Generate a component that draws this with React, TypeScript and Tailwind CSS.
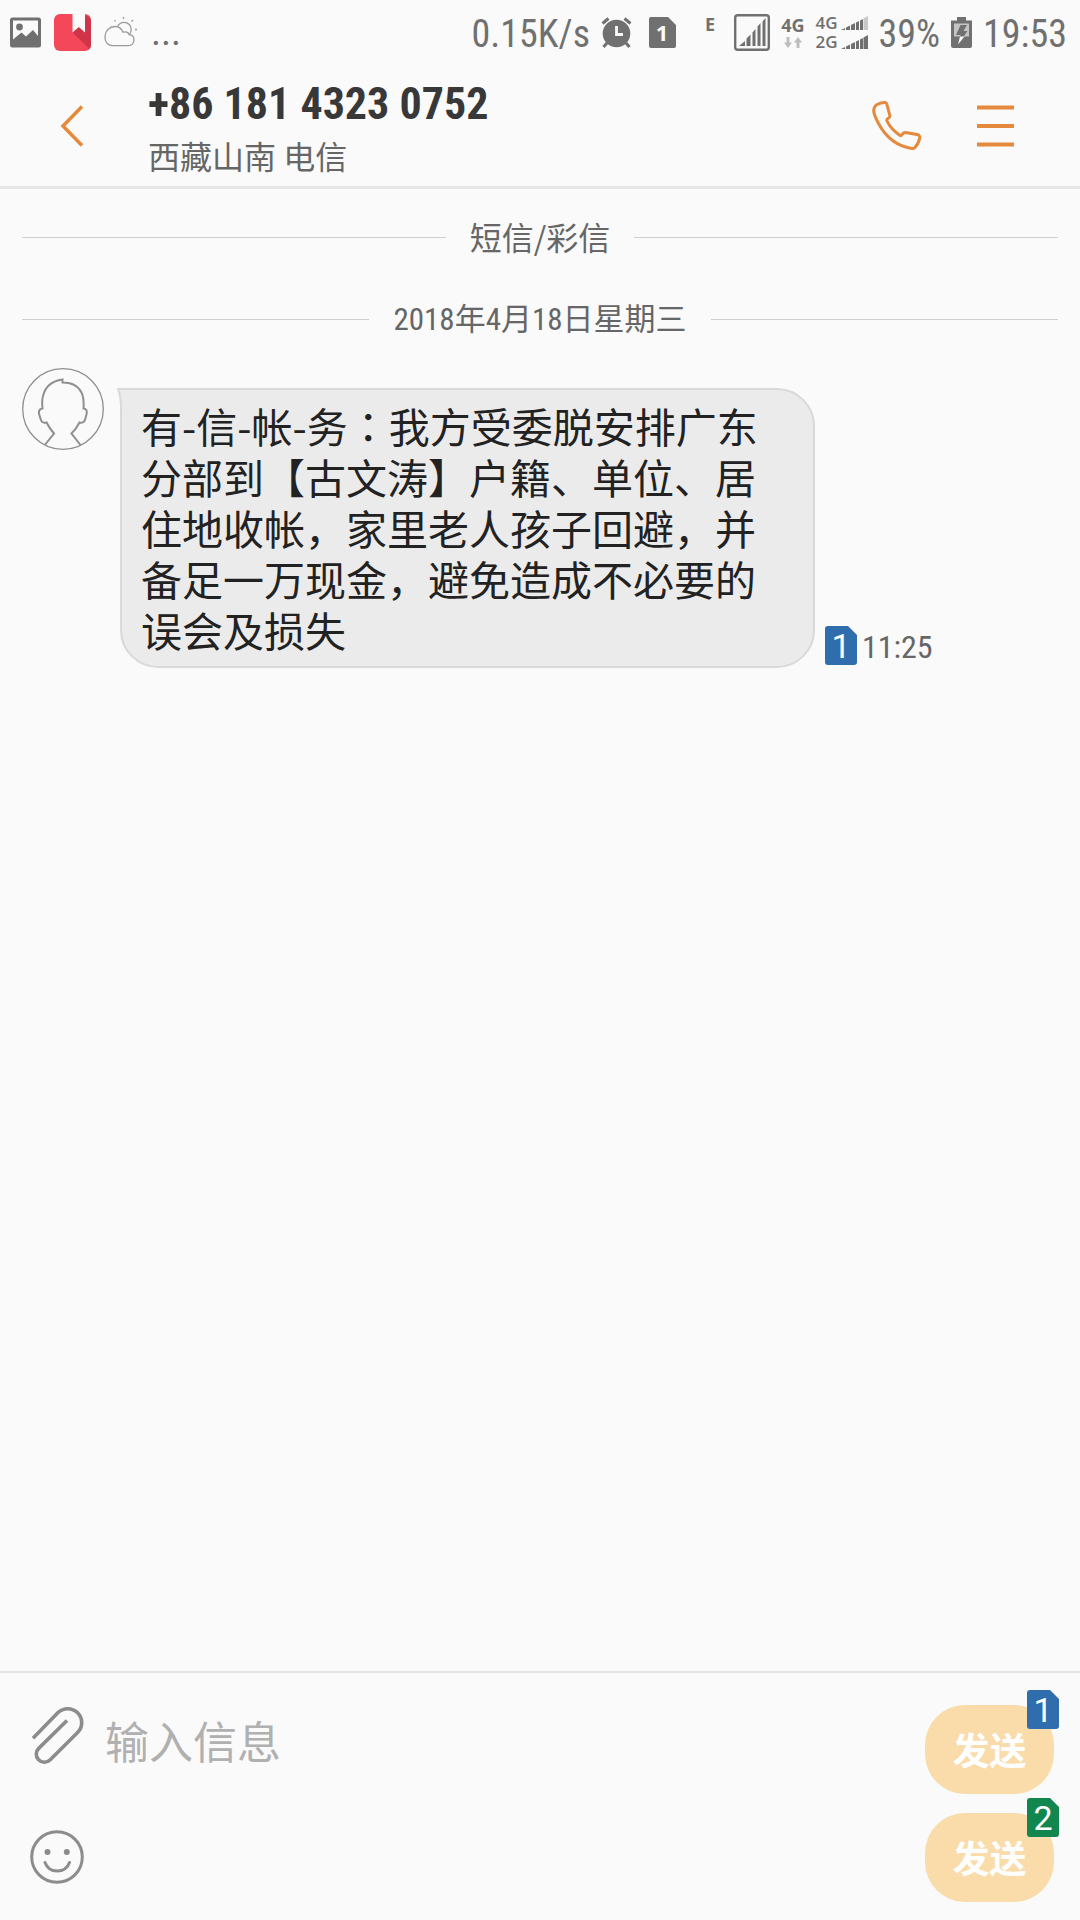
import React from 'react';

const PHONE_NUMBER = '+86 181 4323 0752';

const CJK = "font-['Noto_Sans_CJK_SC',sans-serif]";

/** Status bar notification icons */
function PictureIcon() {
    return (
        <svg width="31" height="31" viewBox="0 0 31 31" className="shrink-0">
            <path
                fill="#707070"
                fillRule="evenodd"
                d="M2.5 0.5h26a2.5 2.5 0 0 1 2.5 2.5v25a2.5 2.5 0 0 1-2.5 2.5h-26A2.5 2.5 0 0 1 0 28V3A2.5 2.5 0 0 1 2.5 .5ZM3 3.5v19l8.5-7 4.5 4L23 13l5 6V3.5Z"
            />
            <circle cx="9.5" cy="10" r="3.4" fill="#707070" />
        </svg>
    );
}

function BookmarkAppIcon() {
    return (
        <svg width="37" height="37" viewBox="0 0 37 37" className="shrink-0">
            <rect width="37" height="37" rx="6" fill="#f5475a" />
            <path d="M18.500 18.500 31 6V2q6 0 6 6v23q0 2-1.500 4Z" fill="#cf3448" />
            <path d="M18.500 0h12.500v18.500l-6.200-5.500-6.300 5.500Z" fill="#fafafa" />
        </svg>
    );
}

function WeatherIcon() {
    return (
        <svg width="34" height="31" viewBox="0 0 34 31" className="shrink-0" fill="none" stroke="#9a9a9a" strokeWidth="1.300">
            <path d="M8.500 28.700a7.500 7.500 0 0 1-7.400-7.500V19C1.500 13.500 5.500 9.500 11 9.500c3.500 0 6.500 2 8 5.700 3-.7 5.500.5 6.200 2.500 3.200.3 4.800 2.700 4.800 5.300 0 3.300-2.500 5.700-5.500 5.700Z" />
            <path d="M13.500 9.500C15 6.500 17.300 5.300 20 5.300c4.500 0 7.200 3.500 7.200 7.200 0 2-.7 3.800-1.700 4.900M19.500 0v2M10.500 3l1 1.500M29 3l-1.500 1.500M31 12.500H33" />
        </svg>
    );
}

function AlarmIcon() {
    return (
        <svg width="31" height="31" viewBox="0 0 31 31" className="shrink-0">
            <circle cx="15.500" cy="16.500" r="13.800" fill="#707070" />
            <path d="M1.500 6.500 7.500 1.500M29.500 6.500 23.500 1.500M6 26 2.500 30M25 26l3.500 4" stroke="#707070" strokeWidth="3" />
            <path d="M15.500 9v8.500H22" stroke="#fafafa" strokeWidth="2.800" fill="none" />
        </svg>
    );
}

function StatusSimIcon() {
    return (
        <svg width="27" height="31" viewBox="0 0 27 31" className="shrink-0">
            <path d="M2 0h17l8 8v21a2 2 0 0 1-2 2H2a2 2 0 0 1-2-2V2a2 2 0 0 1 2-2Z" fill="#707070" />
            <text x="13" y="24" textAnchor="middle" fontSize="22" fontWeight="700" fill="#fafafa" fontFamily="'Open Sans', sans-serif">
                1
            </text>
        </svg>
    );
}

function SignalBoxIcon() {
    return (
        <svg width="36" height="37" viewBox="0 0 36 37" className="shrink-0">
            <rect x="1.200" y="1.200" width="33.600" height="34.600" rx="2.500" fill="none" stroke="#707070" strokeWidth="2.400" />
            <path
                fill="#707070"
                d="M5 32l6-5v5ZM12.500 24.500l4-4V32h-4ZM18.500 18.500l3-3.500v17h-3ZM23.500 12.500l3-3.500v23h-3ZM28.500 7.500 31.500 4v28h-3Z"
            />
        </svg>
    );
}

function DataArrowsIcon() {
    return (
        <svg width="18" height="11" viewBox="0 0 18 11" fill="#bdbdbd">
            <path d="M2.500 0h3v5.500H8L4 11 0 5.500h2.500ZM12.500 11h3V5.500H18L14 0l-4 5.500h2.500Z" />
        </svg>
    );
}

function SignalBars({ weak = false }: { weak?: boolean }) {
    return (
        <svg width="27" height="14" viewBox="0 0 27 14" fill="#707070">
            <path d="M0 14l4-2v2ZM5 11.500l4-2V14H5ZM10 9l4-2v7h-4ZM15 6.500l3-1.500v9h-3ZM19 4.500 22 3v11h-3Z" />
            <path d="M22.500 2.500 27 0v14h-4.500Z" fill={weak ? '#c8c8c8' : '#707070'} />
        </svg>
    );
}

function BatteryIcon() {
    return (
        <svg width="21" height="31" viewBox="0 0 21 31" className="shrink-0">
            <path d="M6 0h9v3.500h6V29a2 2 0 0 1-2 2H2a2 2 0 0 1-2-2V3.500h6Z" fill="#707070" />
            <path d="M3 6.500h15v13H3Z" fill="#c4c4c4" />
            <path d="M9.500 8h6.500l-3.500 6h4L7 27.500l2.500-9.500H5Z" fill="#707070" />
            <path d="M6.500 19.500h7L7 27.500l2-8Z" fill="#fafafa" />
        </svg>
    );
}

/** SIM card shaped marker, blue for slot 1 and green for slot 2 */
function SimBadge({ slot }: { slot: 1 | 2 }) {
    return (
        <svg width="32" height="39" viewBox="0 0 32 39" className="shrink-0 overflow-visible">
            <path
                d="M3 0h20l9 9v27a3 3 0 0 1-3 3H3a3 3 0 0 1-3-3V3a3 3 0 0 1 3-3Z"
                fill={slot === 1 ? '#2f6dad' : '#12864f'}
            />
            <text x="16" y="32" textAnchor="middle" fontSize="34" fontWeight="400" fill="#ffffff" fontFamily="Roboto, sans-serif">
                {slot}
            </text>
        </svg>
    );
}

function StatusBar() {
    return (
        <div className="flex h-[64px] items-center justify-between pr-[13px] pl-[10px] text-[38px] leading-none text-[#707070]">
            <div className="flex items-center gap-[13px]">
                <PictureIcon />
                <BookmarkAppIcon />
                <WeatherIcon />
                <span className="font-[Roboto]">...</span>
            </div>
            <div className="flex items-center gap-[11px]">
                <span className="pt-1">0.15K/s</span>
                <AlarmIcon />
                <div className="flex pr-[18px] pl-[6px]">
                    <StatusSimIcon />
                </div>
                <div className="flex h-[33px] items-start pr-2 font-['Open_Sans'] text-[18px] leading-4 font-bold">E</div>
                <SignalBoxIcon />
                <div className="flex flex-col items-center gap-1 font-['Open_Sans'] text-[18px] leading-4 font-bold">
                    4G
                    <DataArrowsIcon />
                </div>
                <div className="grid grid-cols-[auto_auto] items-center gap-x-[3px] gap-y-[3px] font-['Open_Sans'] text-[17px] leading-4 font-semibold">
                    <span>4G</span>
                    <SignalBars weak />
                    <span>2G</span>
                    <SignalBars />
                </div>
                <span className="pt-1">39%</span>
                <BatteryIcon />
                <span className="pt-1">19:53</span>
            </div>
        </div>
    );
}

function Header() {
    return (
        <header className="flex h-[125px] items-center border-b-[3px] border-[#e6e6e6] pt-[2px] pr-[62px] pl-[52px]">
            <button aria-label="返回" className="mr-[56px] flex w-10 justify-center">
                <svg width="24" height="42" viewBox="0 0 24 42" fill="none" stroke="#e58a3c" strokeWidth="3.500">
                    <path d="M22 1.500 3 21l19 19.500" />
                </svg>
            </button>
            <div className="flex flex-1 flex-col pt-1">
                <h1 className="text-[44px] leading-[54px] font-bold text-[#383838]">{PHONE_NUMBER}</h1>
                <p className={`${CJK} text-[32px] leading-[48px] text-[#666666]`}>西藏山南 电信</p>
            </div>
            <div className="flex items-center gap-[50px]">
                <button aria-label="拨打电话">
                    <svg width="52" height="52" viewBox="0 0 52 52" fill="none" stroke="#e58a3c" strokeWidth="3" strokeLinejoin="round">
                        <path d="M5.700 4.800Q10 2.500 14 2.600q1.700.3 2 2L18.800 15.500q.3 1.500-.8 2.300-2.500 1.400-2.200 2.800Q20 29.500 29.500 35.700q1.200-.2 2-1.700 1-1.600 3-1.500L46 34.500q3 .5 2.700 3.500-.7 5-5 9.800-1 1-3 .7Q19 45 7.500 23.500 2.500 14 2.700 10q.8-4 3-5.200Z" />
                    </svg>
                </button>
                <button aria-label="菜单" className="flex w-[45px] justify-center">
                    <svg width="37" height="42" viewBox="0 0 37 42" stroke="#e58a3c" strokeWidth="4">
                        <path d="M0 2.500h37M0 21h37M0 39.500h37" />
                    </svg>
                </button>
            </div>
        </header>
    );
}

function Divider({ children }: { children: React.ReactNode }) {
    return (
        <div className="flex h-12 items-center gap-6 leading-[40px] text-[#666666]">
            <span className="h-px flex-1 bg-[#cfcfcf]" />
            <span className="pt-[6px]">{children}</span>
            <span className="h-px flex-1 bg-[#cfcfcf]" />
        </div>
    );
}

function Avatar() {
    return (
        <svg width="82" height="82" viewBox="0 0 82 82" className="shrink-0" fill="none" stroke="#8f8f8f">
            <circle cx="41" cy="41" r="40.300" strokeWidth="1.300" />
            <path
                strokeWidth="2"
                d="M22.800 77 32 65.500C29 62 26.500 58.500 24.500 54.500 21.500 55.500 19.500 54 18.600 51L17 45.500C16.500 42.500 18 40.500 20.500 40.500 20 36 19.800 32 21 28 23.500 17.500 31 12.800 40.500 11.500V14.500C50.500 14.500 57.500 18.500 60.500 27 61.800 31.500 61.800 36 61.500 40.500 64 40.500 65.200 42.500 64.700 45.500L63.300 51C62.500 54 60 55.500 57.500 54.500 55.500 58.500 53 62 49.500 65.500L58.500 77"
            />
        </svg>
    );
}

function Message() {
    return (
        <article className="mt-[25px] flex items-start gap-4">
            <Avatar />
            <div className="mt-5 flex items-end gap-[10px]">
                <div className={`${CJK} relative max-w-[695px] rounded-[38px] rounded-tl-none border-2 border-[#d9d9d9] bg-[#ebebeb] pt-[10px] pr-[50px] pb-[11px] pl-[19px] text-[41px] leading-[51px] text-[#222222]`}>
                    <svg width="7" height="26" viewBox="0 0 7 26" className="absolute -top-[2px] -left-[5px]">
                        <path d="M0 1h7v25H4Q4.500 9 0 1Z" fill="#ebebeb" />
                        <path d="M7 1H1Q4.500 9 4 26" fill="none" stroke="#d9d9d9" strokeWidth="2" />
                    </svg>
                    <p>
                        有-信-帐-务<span className="font-['Noto_Sans_CJK_TC']">：</span>
                        我方受委脱安排广东分部到【古文涛】户籍、单位、居住地收帐，家里老人孩子回避，并备足一万现金，避免造成不必要的误会及损失
                    </p>
                </div>
                <div className="flex items-center gap-[5px] pb-[3px] text-[32px] leading-[35px] text-[#666666]">
                    <SimBadge slot={1} />
                    <time className="pt-1">11:25</time>
                </div>
            </div>
        </article>
    );
}

function SendButton({ slot }: { slot: 1 | 2 }) {
    return (
        <button className={`${CJK} relative h-[89px] w-[129px] rounded-[40px] bg-[#f9dcaa] text-[37px] font-bold text-[#fefefe]`}>
            发送
            <span className="absolute -top-[15px] -right-[5px]">
                <SimBadge slot={slot} />
            </span>
        </button>
    );
}

function Composer() {
    return (
        <footer className="flex border-t-2 border-[#e4e4e4] pt-8 pr-[26px] pb-[18px] pl-[30px]">
            <div className="flex flex-1 flex-col gap-[19px]">
                <div className="flex h-[89px] items-start gap-[19px]">
                    <button aria-label="添加附件" className="shrink-0">
                        <svg width="56" height="60" viewBox="0 0 56 60" fill="none" stroke="#8c8c8c" strokeWidth="3.600">
                            <path d="M3 33.300 27.800 7.800A14 14 0 0 1 47.600 27.600L20 55A8 8 0 0 1 8.700 43.400L37 15.500" />
                        </svg>
                    </button>
                    <input
                        type="text"
                        aria-label="输入信息"
                        placeholder="输入信息"
                        className={`${CJK} h-[70px] min-w-0 flex-1 bg-transparent text-[44px] outline-none placeholder:text-[#b0b0b0]`}
                    />
                </div>
                <button aria-label="表情" className="flex h-[87px] w-[56px] items-center">
                    <svg width="54" height="54" viewBox="0 0 54 54" fill="none" stroke="#8c8c8c" strokeWidth="3">
                        <circle cx="27" cy="27" r="25.300" />
                        <path d="M15 32.500C17 38 21.500 41 27.200 41S37.500 38 39.500 32.500" strokeLinecap="round" />
                        <circle cx="17.500" cy="22" r="3" fill="#8c8c8c" stroke="none" />
                        <circle cx="36.800" cy="22" r="3" fill="#8c8c8c" stroke="none" />
                    </svg>
                </button>
            </div>
            <div className="flex flex-col gap-[19px]">
                <SendButton slot={1} />
                <SendButton slot={2} />
            </div>
        </footer>
    );
}

export default function App() {
    return (
        <div className="flex min-h-screen flex-col bg-[#fafafa] font-['Roboto_Condensed','Roboto','Noto_Sans_CJK_SC',sans-serif]">
            <StatusBar />
            <Header />
            <main className="flex-1 px-[22px] pt-6">
                <div className="flex flex-col gap-[34px]">
                    <Divider>
                        <span className={`${CJK} text-[32px]`}>短信/彩信</span>
                    </Divider>
                    <Divider>
                        <time className="text-[31px]">2018年4月18日星期三</time>
                    </Divider>
                </div>
                <Message />
            </main>
            <Composer />
        </div>
    );
}
